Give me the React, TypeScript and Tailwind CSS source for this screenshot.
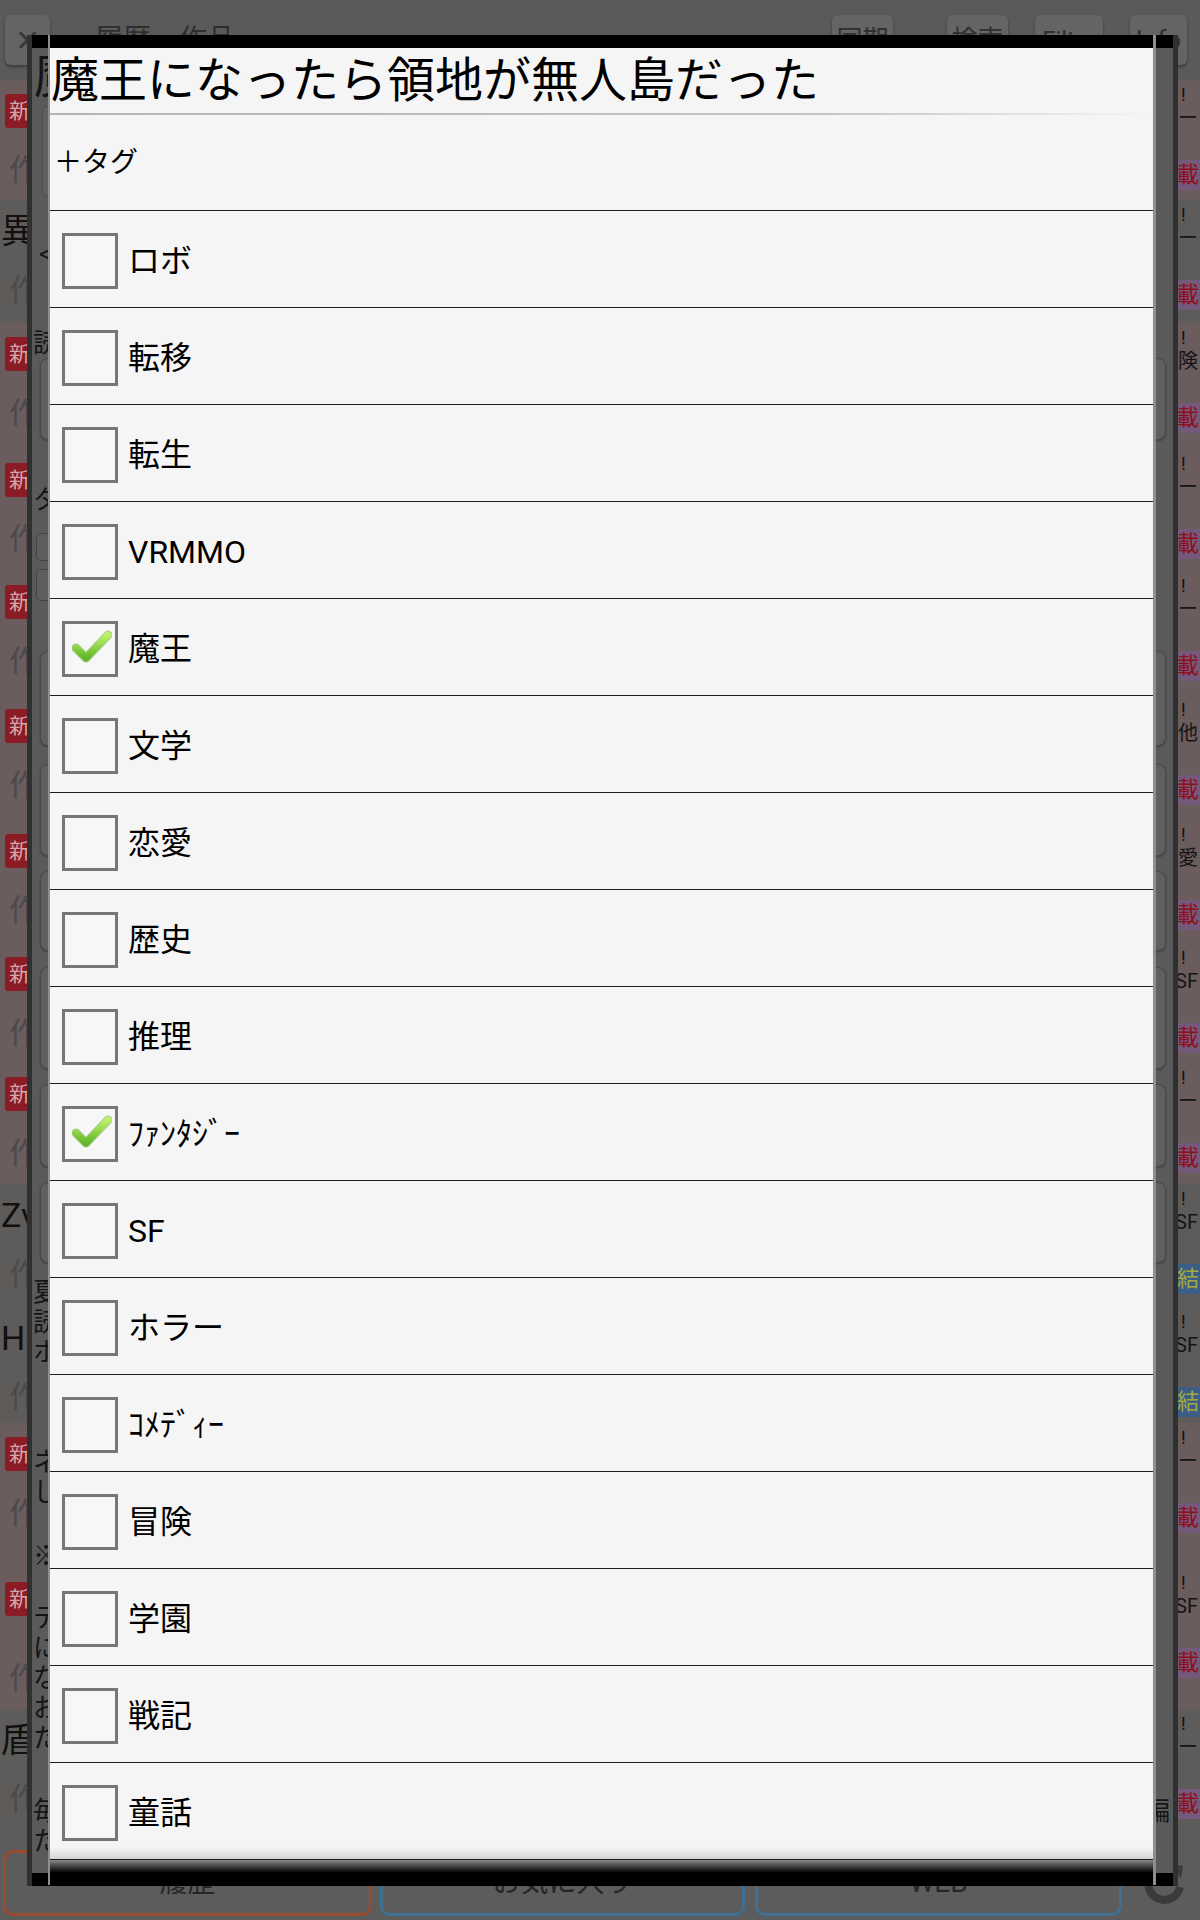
import React from 'react';

type Row = {
  h: string;
  kind: 'new' | 'title';
  t?: string;
  g: string;
  b: '載' | '結';
  tall?: boolean;
};

const rows: Row[] = [
  { h: 'h-[120px]', kind: 'new', g: 'ー', b: '載' },
  { h: 'h-[123px]', kind: 'title', t: '異世', g: 'ー', b: '載' },
  { h: 'h-[126px]', kind: 'new', g: '険', b: '載' },
  { h: 'h-[122px]', kind: 'new', g: 'ー', b: '載' },
  { h: 'h-[124px]', kind: 'new', g: 'ー', b: '載' },
  { h: 'h-[125px]', kind: 'new', g: '他', b: '載' },
  { h: 'h-[123px]', kind: 'new', g: '愛', b: '載' },
  { h: 'h-[120px]', kind: 'new', g: 'SF', b: '載' },
  { h: 'h-[121px]', kind: 'new', g: 'ー', b: '載' },
  { h: 'h-[123px]', kind: 'title', t: 'Zv', g: 'SF', b: '結' },
  { h: 'h-[116px]', kind: 'title', t: 'He', g: 'SF', b: '結' },
  { h: 'h-[145px]', kind: 'new', g: 'ー', b: '載' },
  { h: 'h-[141px]', kind: 'new', g: 'SF', b: '載', tall: true },
  { h: 'h-[136px]', kind: 'title', t: '盾の', g: 'ー', b: '載' },
];

const tags: [string, boolean][] = [
  ['ロボ', false],
  ['転移', false],
  ['転生', false],
  ['VRMMO', false],
  ['魔王', true],
  ['文学', false],
  ['恋愛', false],
  ['歴史', false],
  ['推理', false],
  ['ﾌｧﾝﾀｼﾞｰ', true],
  ['SF', false],
  ['ホラー', false],
  ['ｺﾒﾃﾞｨｰ', false],
  ['冒険', false],
  ['学園', false],
  ['戦記', false],
  ['童話', false],
];

function TopBar() {
  return (
    <div className="h-[80px] shrink-0 flex items-start pt-[15px] bg-[#5a5a5a]">
      <div className="ml-[5px] w-[45px] h-[50px] rounded-[6px] bg-[#646464] shadow-[0_2px_3px_rgba(0,0,0,0.35)] flex items-center justify-center text-[#3a3a3a] text-[30px]">
        ✕
      </div>
      <div className="ml-[45px] mt-[8px] text-[28px] leading-[34px] text-[#2e2e2e] whitespace-nowrap">
        履歴・作品
      </div>
      <div className="ml-auto flex items-start">
        <div className="w-[61px] h-[50px] rounded-[6px] bg-[#646464] shadow-[0_2px_3px_rgba(0,0,0,0.35)] flex items-center justify-center text-[26px] text-[#2e2e2e]">同期</div>
        <div className="ml-[54px] w-[61px] h-[50px] rounded-[6px] bg-[#646464] shadow-[0_2px_3px_rgba(0,0,0,0.35)] flex items-center justify-center text-[26px] text-[#2e2e2e]">検索</div>
        <div className="ml-[27px] w-[68px] h-[50px] rounded-[6px] bg-[#646464] shadow-[0_2px_3px_rgba(0,0,0,0.35)] flex items-center justify-center text-[24px] text-[#2e2e2e]">Filter</div>
        <div className="ml-[27px] mr-[13px] w-[57px] h-[50px] rounded-[6px] bg-[#646464] shadow-[0_2px_3px_rgba(0,0,0,0.35)] flex items-center justify-center text-[26px] text-[#2e2e2e]">Info</div>
      </div>
    </div>
  );
}

function ListRow({ r }: { r: Row }) {
  return (
    <div
      className={`${r.h} shrink-0 flex justify-between ${
        r.kind === 'new' ? 'bg-[#6b5c5d]' : 'bg-[#5e5b5b]'
      }`}
    >
      <div className="w-[27px] overflow-hidden flex flex-col pt-[12px]">
        <div className="h-[38px] flex items-center whitespace-nowrap">
          {r.kind === 'new' ? (
            <span className="ml-[5px] px-[4px] h-[34px] flex items-center rounded-[3px] bg-[#8b1c25] text-[#d9a5a8] text-[21px] leading-none">
              新着
            </span>
          ) : (
            <span className="ml-[1px] text-[34px] leading-none text-[#111]">{r.t}</span>
          )}
        </div>
        <div
          className={`${r.tall ? 'mt-[40px]' : 'mt-[20px]'} h-[38px] flex items-center pl-[9px] text-[30px] text-[#4a4a4a] whitespace-nowrap`}
        >
          作者
        </div>
      </div>
      <div className="w-[22px] overflow-hidden shrink-0 flex flex-col pt-[4px]">
        <div className="h-[22px] self-start ml-[3px] text-[18px] leading-[22px] text-[#111]">!</div>
        <div className="h-[24px] self-end pr-[2px] text-[20px] leading-[24px] text-[#151515] whitespace-nowrap">
          {r.g}
        </div>
        <div
          className={`mt-[30px] self-end h-[30px] pl-[2px] pr-[1px] flex items-center rounded-l-[3px] whitespace-nowrap text-[22px] leading-none ${
            r.b === '載' ? 'bg-[#735a7c] text-[#8f0f18]' : 'bg-[#3c5e86] text-[#a5aa3c]'
          }`}
        >
          {r.b}
        </div>
      </div>
    </div>
  );
}

function BottomBar() {
  return (
    <div className="h-[75px] shrink-0 flex items-center bg-[#5c5c5c] px-[3px]">
      <div className="w-[369px] h-[66px] rounded-[10px] border-[3px] border-[#9a4a2e] flex items-center justify-center text-[28px] text-[#262626]">
        履歴
      </div>
      <div className="ml-[8px] w-[365px] h-[66px] rounded-[10px] border-[3px] border-[#3f6f92] flex items-center justify-center text-[28px] text-[#262626]">
        お気に入り
      </div>
      <div className="ml-[10px] w-[367px] h-[66px] rounded-[10px] border-[3px] border-[#3f6f92] flex items-center justify-center text-[28px] text-[#262626]">
        WEB
      </div>
      <div className="ml-[18px] w-[48px] h-[50px] flex items-center justify-center">
        <svg width="46" height="46" viewBox="0 0 46 46">
          <path d="M36 14 A16 16 0 1 0 39 27" fill="none" stroke="#3b3b3b" strokeWidth="8" />
          <path d="M30 4 L42 6 L40 19 Z" fill="#3b3b3b" />
        </svg>
      </div>
    </div>
  );
}

function PanelButton({ cls }: { cls: string }) {
  return (
    <div
      className={`${cls} shrink-0 ml-[8px] mr-[7px] rounded-[8px] bg-[#5f5f5f] border border-[#4a4a4a] shadow-[0_1px_2px_rgba(0,0,0,0.3)]`}
    />
  );
}

function Clip({ cls, children }: { cls: string; children: React.ReactNode }) {
  return (
    <div className={`${cls} shrink-0 w-[18px] overflow-hidden whitespace-nowrap text-[#151515]`}>
      {children}
    </div>
  );
}

function MidPanel() {
  return (
    <div className="absolute left-[27px] top-[35px] w-[1151px] h-[1851px] flex flex-col bg-[#5a5a5a] border-x-[5px] border-[#303030]">
      <div className="h-[13px] shrink-0 bg-black" />
      <Clip cls="h-[58px] pl-[2px] text-[48px] leading-[58px]">魔</Clip>
      <div className="h-[91px] shrink-0 ml-[10px] w-[420px] rounded-[6px] bg-[#606060] border border-[#4c4c4c]" />
      <Clip cls="mt-[42px] h-[30px] pl-[7px] text-[24px] leading-[30px]">&lt;</Clip>
      <Clip cls="mt-[59px] h-[30px] pl-[1px] text-[26px] leading-[30px]">読</Clip>
      <PanelButton cls="h-[82px]" />
      <Clip cls="mt-[45px] h-[30px] pl-[1px] text-[26px] leading-[30px]">タ</Clip>
      <div className="mt-[18px] h-[28px] shrink-0 ml-[4px] w-[200px] rounded-[5px] bg-[#5e5e5e] border border-[#444]" />
      <div className="mt-[8px] h-[32px] shrink-0 ml-[4px] w-[200px] rounded-[5px] bg-[#5e5e5e] border border-[#444]" />
      <div className="mt-[50px]" />
      <PanelButton cls="h-[95px]" />
      <div className="mt-[18px]" />
      <PanelButton cls="h-[92px]" />
      <div className="mt-[15px]" />
      <PanelButton cls="h-[80px]" />
      <div className="mt-[16px]" />
      <PanelButton cls="h-[102px]" />
      <div className="mt-[15px]" />
      <PanelButton cls="h-[83px]" />
      <div className="mt-[15px]" />
      <PanelButton cls="h-[81px]" />
      <div className="mt-[14px] shrink-0 flex flex-col text-[26px] leading-[30px]">
        <Clip cls="pl-[1px]">夏</Clip>
        <Clip cls="pl-[1px]">読</Clip>
        <Clip cls="pl-[1px]">ホ</Clip>
      </div>
      <div className="mt-[80px] shrink-0 flex flex-col text-[26px] leading-[30px]">
        <Clip cls="pl-[1px]">ネ</Clip>
        <Clip cls="pl-[1px]">し</Clip>
      </div>
      <div className="mt-[34px] shrink-0 flex flex-col text-[26px] leading-[30px]">
        <Clip cls="pl-[1px]">※</Clip>
      </div>
      <div className="mt-[32px] shrink-0 flex flex-col text-[26px] leading-[30px]">
        <Clip cls="pl-[1px]">テ</Clip>
        <Clip cls="pl-[1px]">に</Clip>
        <Clip cls="pl-[1px]">な</Clip>
        <Clip cls="pl-[1px]">お</Clip>
        <Clip cls="pl-[1px]">た</Clip>
      </div>
      <div className="mt-[43px] shrink-0 flex justify-between text-[26px] leading-[30px]">
        <Clip cls="pl-[1px]">毎</Clip>
        <div className="w-[17px] overflow-hidden whitespace-nowrap text-[#151515] flex justify-end pr-[3px]">編</div>
      </div>
      <div className="shrink-0 flex flex-col text-[26px] leading-[30px]">
        <Clip cls="pl-[1px]">た</Clip>
      </div>
      <div className="mt-auto h-[13px] shrink-0 bg-black" />
    </div>
  );
}

function Check({ id }: { id: string }) {
  return (
    <svg
      width="40"
      height="34"
      viewBox="0 0 40 34"
      className="absolute left-[7px] top-[5px]"
    >
      <defs>
        <linearGradient id={id} x1="0" y1="0" x2="0" y2="1">
          <stop offset="0" stopColor="#bdf06a" />
          <stop offset="1" stopColor="#62b828" />
        </linearGradient>
      </defs>
      <path
        d="M4 19 L14 29 L36 6"
        fill="none"
        stroke="#6aa83a"
        strokeWidth="9"
        strokeLinecap="round"
        strokeLinejoin="round"
        opacity="0.55"
      />
      <path
        d="M4 19 L14 29 L36 6"
        fill="none"
        stroke={`url(#${id})`}
        strokeWidth="7"
        strokeLinecap="round"
        strokeLinejoin="round"
      />
    </svg>
  );
}

function TagDialog() {
  return (
    <div className="absolute left-[48px] top-[35px] w-[1108px] h-[1850px] flex flex-col border-l-[2px] border-r-[3px] border-[#8e8e8e]">
      <div className="h-[13px] shrink-0 bg-black" />
      <div className="relative h-[1811px] shrink-0 flex flex-col bg-[#f5f5f5] overflow-hidden">
        <div className="h-[65px] shrink-0 flex items-center pl-[1px] text-[48px] leading-none text-black whitespace-nowrap">
          魔王になったら領地が無人島だった
        </div>
        <div className="h-[2px] shrink-0 bg-linear-to-r from-[#b4b4b4] via-[#c4c4c4] via-70% to-transparent" />
        <div className="h-[95px] shrink-0 flex items-center pl-[4px] text-[28px] leading-none text-black">
          ＋タグ
        </div>
        {tags.map(([name, checked], i) => (
          <div
            key={name}
            className="h-[97px] shrink-0 flex items-center border-t border-[#1e1e1e] pt-[3px]"
          >
            <div className="relative ml-[12px] w-[56px] h-[56px] shrink-0 border-[3px] border-[#767676] bg-[#f7f7f7]">
              {checked && <Check id={`chk${i}`} />}
            </div>
            <div className="ml-[10px] text-[32px] leading-none text-black whitespace-nowrap">{name}</div>
          </div>
        ))}
        <div className="absolute left-0 right-0 bottom-0 h-[12px] bg-linear-to-b from-transparent to-[#d6d6d6]" />
      </div>
      <div className="h-[1px] shrink-0 bg-[#1a1a1a]" />
      <div className="h-[12px] shrink-0 bg-linear-to-b from-[#8c8c8c] to-[#0a0a0a]" />
      <div className="flex-1 bg-black" />
    </div>
  );
}

export default function App() {
  return (
    <div className="relative w-[1200px] h-[1920px] overflow-hidden bg-[#5b5b5b] font-['Roboto','Noto_Sans_CJK_JP',sans-serif]">
      <div className="flex flex-col h-full">
        <TopBar />
        <div className="flex flex-col flex-1 overflow-hidden">
          {rows.map((r, i) => (
            <ListRow key={i} r={r} />
          ))}
        </div>
        <BottomBar />
      </div>
      <MidPanel />
      <TagDialog />
    </div>
  );
}
